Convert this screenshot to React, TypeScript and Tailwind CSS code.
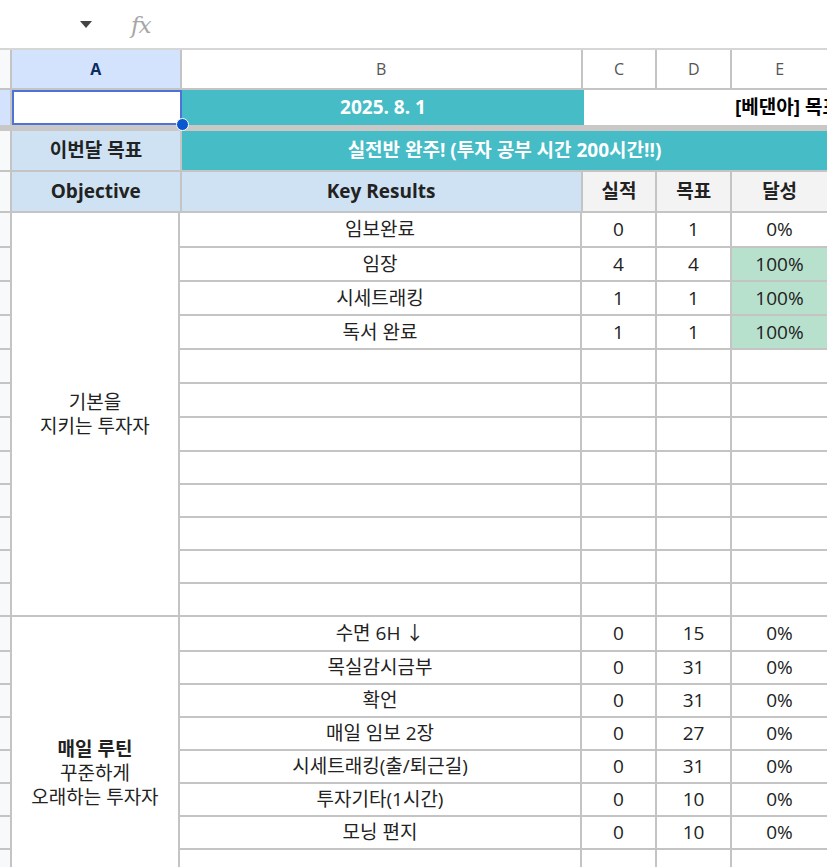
import React from "react";

type DataRow = {
  kr: string;
  actual: string;
  goal: string;
  pct: string;
  done?: boolean;
  h: string;
};

const basicRows: DataRow[] = [
  { kr: "임보완료", actual: "0", goal: "1", pct: "0%", h: "h-[35px]" },
  { kr: "임장", actual: "4", goal: "4", pct: "100%", done: true, h: "h-[34px]" },
  { kr: "시세트래킹", actual: "1", goal: "1", pct: "100%", done: true, h: "h-[34px]" },
  { kr: "독서 완료", actual: "1", goal: "1", pct: "100%", done: true, h: "h-[34px]" },
  { kr: "", actual: "", goal: "", pct: "", h: "h-[34px]" },
  { kr: "", actual: "", goal: "", pct: "", h: "h-[34px]" },
  { kr: "", actual: "", goal: "", pct: "", h: "h-[34px]" },
  { kr: "", actual: "", goal: "", pct: "", h: "h-[33px]" },
  { kr: "", actual: "", goal: "", pct: "", h: "h-[33px]" },
  { kr: "", actual: "", goal: "", pct: "", h: "h-[33px]" },
  { kr: "", actual: "", goal: "", pct: "", h: "h-[33px]" },
  { kr: "", actual: "", goal: "", pct: "", h: "h-[33px]" },
];

const routineRows: DataRow[] = [
  { kr: "수면 6H ↓", actual: "0", goal: "15", pct: "0%", h: "h-[35px]" },
  { kr: "목실감시금부", actual: "0", goal: "31", pct: "0%", h: "h-[33px]" },
  { kr: "확언", actual: "0", goal: "31", pct: "0%", h: "h-[33px]" },
  { kr: "매일 임보 2장", actual: "0", goal: "27", pct: "0%", h: "h-[33px]" },
  { kr: "시세트래킹(출/퇴근길)", actual: "0", goal: "31", pct: "0%", h: "h-[33px]" },
  { kr: "투자기타(1시간)", actual: "0", goal: "10", pct: "0%", h: "h-[33px]" },
  { kr: "모닝 편지", actual: "0", goal: "10", pct: "0%", h: "h-[33px]" },
  { kr: "", actual: "", goal: "", pct: "", h: "h-[33px]" },
  { kr: "", actual: "", goal: "", pct: "", h: "h-[33px]" },
];

function Row({ row }: { row: DataRow }) {
  return (
    <div className={`flex ${row.h} border-b-2 border-[#c4c4c4]`}>
      <div className="flex w-[402px] items-center justify-center border-r-2 border-[#c4c4c4]">
        {row.kr}
      </div>
      <div className="flex w-[75px] items-center justify-center border-r-2 border-[#c4c4c4]">
        {row.actual}
      </div>
      <div className="flex w-[75px] items-center justify-center border-r-2 border-[#c4c4c4]">
        {row.goal}
      </div>
      <div
        className={`flex w-[95px] items-center justify-center ${
          row.done ? "bg-[#b7e1cd]" : ""
        }`}
      >
        {row.pct}
      </div>
    </div>
  );
}

function Group({
  rows,
  objective,
  aHeight,
}: {
  rows: DataRow[];
  objective: React.ReactNode;
  aHeight?: string;
}) {
  return (
    <div className="flex items-start">
      <div className="flex w-[12px] flex-col border-r-2 border-[#c4c4c4]">
        {rows.map((row, i) => (
          <div className={`${row.h} border-b-2 border-[#c4c4c4] bg-[#f8f9fa]`} key={i} />
        ))}
      </div>
      <div
        className={`flex w-[170px] items-center justify-center self-stretch border-r-2 border-b-2 border-[#c4c4c4] text-center leading-[24px] ${
          aHeight ?? ""
        }`}
      >
        {objective}
      </div>
      <div className="flex flex-col">
        {rows.map((row, i) => (
          <Row key={i} row={row} />
        ))}
      </div>
    </div>
  );
}

export default function App() {
  return (
    <main className="h-[867px] w-[827px] overflow-hidden bg-white font-['Open_Sans','Noto_Sans_CJK_KR',sans-serif] text-[19px] text-[#222]">
      {/* formula bar */}
      <div className="flex h-[50px] border-b-2 border-[#d6d6d6]">
        <div className="flex w-[113px] items-center justify-end pr-[21px]">
          <svg width="12" height="7" viewBox="0 0 12 7">
            <polygon points="0,0 12,0 6,7" fill="#444" />
          </svg>
        </div>
        <div className="flex flex-1 items-center pl-[18px] pt-[3px]">
          <span className="font-['DejaVu_Serif',serif] text-[23px] italic tracking-[-1px] text-[#a6a6a6]">
            fx
          </span>
        </div>
      </div>

      {/* column headers */}
      <div className="flex h-[40px] border-b-2 border-[#c4c4c4] text-[16px] text-[#555]">
        <div className="w-[12px] border-r-2 border-[#c4c4c4] bg-[#f8f9fa]" />
        <div className="flex w-[170px] items-center justify-center border-r-2 border-[#c4c4c4] bg-[#d3e3fd] font-bold text-[#0b2c5c]">
          A
        </div>
        <div className="flex w-[402px] items-center justify-center border-r-2 border-[#c4c4c4]">
          B
        </div>
        <div className="flex w-[75px] items-center justify-center border-r-2 border-[#c4c4c4]">
          C
        </div>
        <div className="flex w-[75px] items-center justify-center border-r-2 border-[#c4c4c4]">
          D
        </div>
        <div className="flex w-[95px] items-center justify-center">E</div>
      </div>

      {/* row 1 */}
      <div className="flex h-[35px]">
        <div className="w-[12px] border-r-2 border-[#c4c4c4] bg-[#d3e3fd]" />
        <div className="relative w-[170px] border-2 border-[#4d73d9] bg-white">
          <span className="absolute -bottom-[8px] -right-[9px] h-[13px] w-[13px] rounded-full border border-white bg-[#0b57d0]" />
        </div>
        <div className="flex w-[402px] items-center justify-center bg-[#45bcc6] font-bold text-white">
          2025. 8. 1
        </div>
        <div className="flex flex-1 items-center overflow-hidden whitespace-nowrap pl-[151px] font-bold text-black">
          [베댄아] 목표
        </div>
      </div>

      {/* frozen divider */}
      <div className="h-[6px] bg-[#cac7c7]" />

      {/* row 2 */}
      <div className="flex h-[41px] border-b-2 border-[#c4c4c4]">
        <div className="w-[12px] border-r-2 border-[#c4c4c4] bg-[#f8f9fa]" />
        <div className="flex w-[170px] items-center justify-center border-r-2 border-[#c4c4c4] bg-[#cfe2f3] font-bold">
          이번달 목표
        </div>
        <div className="flex flex-1 items-center justify-center bg-[#45bcc6] font-bold text-white">
          실전반 완주! (투자 공부 시간 200시간!!)
        </div>
      </div>

      {/* row 3 */}
      <div className="flex h-[41px] border-b-2 border-[#c4c4c4] font-bold">
        <div className="w-[12px] border-r-2 border-[#c4c4c4] bg-[#f8f9fa]" />
        <div className="flex w-[170px] items-center justify-center border-r-2 border-[#c4c4c4] bg-[#cfe2f3]">
          Objective
        </div>
        <div className="flex w-[402px] items-center justify-center border-r-2 border-[#c4c4c4] bg-[#cfe2f3]">
          Key Results
        </div>
        <div className="flex w-[75px] items-center justify-center border-r-2 border-[#c4c4c4] bg-[#f3f3f3]">
          실적
        </div>
        <div className="flex w-[75px] items-center justify-center border-r-2 border-[#c4c4c4] bg-[#f3f3f3]">
          목표
        </div>
        <div className="flex w-[95px] items-center justify-center bg-[#f3f3f3]">
          달성
        </div>
      </div>

      <Group
        rows={basicRows}
        objective={
          <div>
            기본을
            <br />
            지키는 투자자
          </div>
        }
      />
      <Group
        rows={routineRows}
        aHeight="h-[313px]"
        objective={
          <div>
            <span className="font-bold">매일 루틴</span>
            <br />
            꾸준하게
            <br />
            오래하는 투자자
          </div>
        }
      />
    </main>
  );
}
